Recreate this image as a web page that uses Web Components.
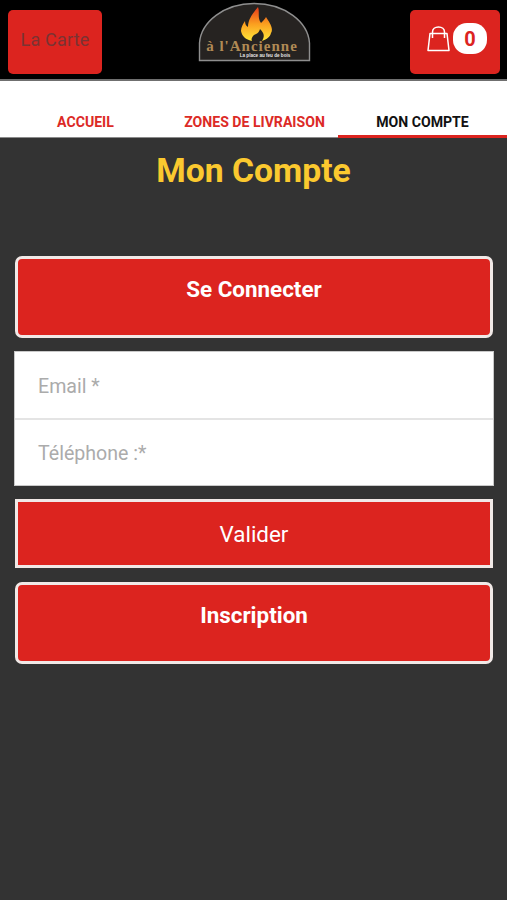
<!DOCTYPE html>
<html>
<head>
<meta charset="utf-8">
<title>Mon Compte</title>
<style>
html, body { margin: 0; height: 100%; background: #333333; }
body { font-family: Roboto, "Liberation Sans", sans-serif; }
</style>
</head>
<body>
<app-page>
    <app-header slot="header"></app-header>
    <app-tabs slot="tabs">
        <tab-item>ACCUEIL</tab-item>
        <tab-item>ZONES DE LIVRAISON</tab-item>
        <tab-item active>MON COMPTE</tab-item>
    </app-tabs>
    <h1-title slot="main">Mon Compte</h1-title>
    <red-button slot="main" kind="tall" style="margin-top:60px">Se Connecter</red-button>
    <login-form slot="main" style="margin-top:13px"></login-form>
    <red-button slot="main" kind="flat" style="margin-top:13px">Valider</red-button>
    <red-button slot="main" kind="tall" style="margin-top:14px">Inscription</red-button>
</app-page>

<script>
class AppPage extends HTMLElement {
    constructor() {
        super();
        this.attachShadow({mode: 'open'});
        this.shadowRoot.innerHTML = `
            <style>
                :host { display: flex; flex-direction: column; height: 900px; background: #333333; overflow: hidden; }
                main { display: flex; flex-direction: column; align-items: stretch; padding: 0 14px 0 15px; }
            </style>
            <slot name="header"></slot>
            <slot name="tabs"></slot>
            <main><slot name="main"></slot></main>
        `;
    }
}

class AppHeader extends HTMLElement {
    constructor() {
        super();
        this.attachShadow({mode: 'open'});
        this.shadowRoot.innerHTML = `
            <style>
                :host { display: block; background: #000; border-bottom: 2px solid #6f6f6f; }
                .bar { height: 79px; box-sizing: border-box; padding: 10px 7px 5px 8px; display: flex; justify-content: space-between; align-items: stretch; position: relative; }
                .carte, .cart { background: #dc241f; border-radius: 5px; display: flex; }
                .carte { width: 94px; color: #7a3333; font-size: 18px; justify-content: center; padding-top: 19px; box-sizing: border-box; letter-spacing: 0.2px; }
                .cart { width: 90px; align-items: center; box-sizing: border-box; padding: 0 0 7px 17px; gap: 2px; }
                .count { width: 34px; height: 31px; border-radius: 14px; background: #fff; color: #dc241f; font-weight: 700; font-size: 20px; display: flex; align-items: center; justify-content: center; margin-left: 1px; }
                .logo { position: absolute; left: 198px; top: 2px; }
                svg { display: block; }
            </style>
            <div class="bar">
                <div class="carte">La Carte</div>
                <svg class="logo" width="113" height="60" viewBox="0 0 113 60">
                    <defs>
                        <linearGradient id="fl" x1="0" y1="1" x2="0" y2="0">
                            <stop offset="0" stop-color="#ffe83a"/>
                            <stop offset="0.5" stop-color="#fb9f1f"/>
                            <stop offset="1" stop-color="#e5391a"/>
                        </linearGradient>
                    </defs>
                    <path d="M1.5 58.5 V41 C3 20 26 1.5 56 1.5 C87 1.5 110 20 111.5 41 V58.5 Z" fill="#262321" stroke="#8f8f8f" stroke-width="1.4"/>
                    <path d="M60 5 C62 10 59 16 63 21 C65 19 67 17 68 15 C71 20 76 26 73 31 C72 35 69 37 64 39 C67 34 66 31 62 27 C61 31 58 32 56 33 C54 35 53 37 54 39 C49 38 44 35 43 29 C43 25 45 22 47 19 C47 22 48 24 50 25 C50 17 55 11 60 5 Z" fill="url(#fl)"/>
                    <text x="54" y="49" text-anchor="middle" font-family="Liberation Serif, serif" font-weight="700" font-size="15" letter-spacing="1" fill="#b08a55">à l'Ancienne</text>
                    <text x="67" y="55" text-anchor="middle" font-family="Liberation Sans, sans-serif" font-weight="700" font-size="4.6" fill="#e6e6e6">La place au feu de bois</text>
                </svg>
                <div class="cart">
                    <svg width="23" height="26" viewBox="0 0 23 26" fill="none" stroke="#fff" stroke-width="1.5">
                        <path d="M3 7.5 H20 L22 24.5 H1 Z" stroke-linejoin="round"/>
                        <path d="M5.5 12 V6 C5.5 3 8 1 11.5 1 C15 1 17.5 3 17.5 6 V12"/>
                    </svg>
                    <div class="count">0</div>
                </div>
            </div>
        `;
    }
}

class AppTabs extends HTMLElement {
    constructor() {
        super();
        this.attachShadow({mode: 'open'});
        this.shadowRoot.innerHTML = `
            <style>
                :host { display: grid; grid-template-columns: 171px 167px 169px; height: 57px; background: #fff; box-sizing: border-box; }
            </style>
            <slot></slot>
        `;
    }
}

class TabItem extends HTMLElement {
    constructor() {
        super();
        this.attachShadow({mode: 'open'});
        this.shadowRoot.innerHTML = `
            <style>
                :host { display: flex; align-items: flex-end; justify-content: center; box-sizing: border-box; color: #dc2a26; font-weight: 700; font-size: 14.1px; line-height: 16px; padding-bottom: 7px; border-bottom: 1px solid #8a8a8a; white-space: nowrap; }
                :host([active]) { color: #111; border-bottom: 3px solid #dc241f; padding-bottom: 5px; }
            </style>
            <slot></slot>
        `;
    }
}

class H1Title extends HTMLElement {
    constructor() {
        super();
        this.attachShadow({mode: 'open'});
        this.shadowRoot.innerHTML = `
            <style>
                :host { display: block; color: #fbc92f; font-weight: 700; font-size: 33.7px; line-height: 38px; text-align: center; margin-top: 14px; height: 44px; margin-left: -1px; }
            </style>
            <slot></slot>
        `;
    }
}

class RedButton extends HTMLElement {
    constructor() {
        super();
        this.attachShadow({mode: 'open'});
        this.shadowRoot.innerHTML = `
            <style>
                :host { display: block; box-sizing: border-box; width: 478px; background: #dc241f; color: #fff; border: 3px solid #f1e9e7; text-align: center; font-size: 22.4px; }
                :host([kind="tall"]) { height: 82px; border-radius: 7px; font-weight: 700; padding-top: 16px; line-height: 28px; }
                :host([kind="flat"]) { height: 69px; padding-top: 18px; line-height: 28px; }
            </style>
            <slot></slot>
        `;
    }
}

class LoginForm extends HTMLElement {
    constructor() {
        super();
        this.attachShadow({mode: 'open'});
        this.shadowRoot.innerHTML = `
            <style>
                :host { display: block; box-sizing: border-box; width: 480px; margin-left: -1px; background: #fff; border: 1px solid #c9c9c9; height: 135px; }
                .field { height: 66px; box-sizing: border-box; display: flex; align-items: center; padding: 2px 0 0 23px; color: #ababab; font-size: 19.6px; }
                .field + .field { height: 67px; border-top: 2px solid #e4e4e4; padding-top: 1px; }
            </style>
            <div class="field">Email *</div>
            <div class="field">Téléphone :*</div>
        `;
    }
}

window.customElements.define('app-page', AppPage);
window.customElements.define('app-header', AppHeader);
window.customElements.define('app-tabs', AppTabs);
window.customElements.define('tab-item', TabItem);
window.customElements.define('h1-title', H1Title);
window.customElements.define('red-button', RedButton);
window.customElements.define('login-form', LoginForm);
</script>
</body>
</html>
